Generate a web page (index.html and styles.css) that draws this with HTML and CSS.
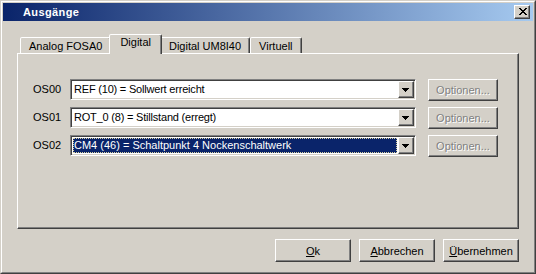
FILE: index.html
```html
<!DOCTYPE html>
<html lang="de">
<head>
    <meta charset="UTF-8">
    <title>Ausgänge</title>
    <link rel="stylesheet" href="styles.css">
</head>
<body>
    <div class="window">
        <div class="frame">
            <div class="titlebar">
                <span class="title">Ausgänge</span>
                <button class="close raised">
                    <svg width="8" height="7" viewBox="0 0 8 7" shape-rendering="crispEdges"><path d="M0 0h2v1H0z M6 0h2v1H6z M1 1h2v1H1z M5 1h2v1H5z M2 2h4v1H2z M3 3h2v1H3z M2 4h4v1H2z M1 5h2v1H1z M5 5h2v1H5z M0 6h2v1H0z M6 6h2v1H6z" fill="#000"/></svg>
                </button>
            </div>
            <div class="content">
                <div class="tabs">
                    <div class="tab">Analog FOSA0</div>
                    <div class="tab active">Digital</div>
                    <div class="tab">Digital UM8I40</div>
                    <div class="tab">Virtuell</div>
                </div>
                <div class="panel">
                    <div class="rows">
                        <div class="row">
                            <span class="label">OS00</span>
                            <div class="combo">
                                <div class="value"><span class="text narrow">REF (10) = Sollwert erreicht</span></div>
                                <div class="arrow raised">
                                    <svg width="7" height="4" viewBox="0 0 7 4" shape-rendering="crispEdges"><path d="M0 0h7v1H0z M1 1h5v1H1z M2 2h3v1H2z M3 3h1v1H3z" fill="#000"/></svg>
                                </div>
                            </div>
                            <button class="btn options raised" disabled>Optionen...</button>
                        </div>
                        <div class="row">
                            <span class="label">OS01</span>
                            <div class="combo">
                                <div class="value"><span class="text narrow">ROT_0 (8) = Stillstand (erregt)</span></div>
                                <div class="arrow raised">
                                    <svg width="7" height="4" viewBox="0 0 7 4" shape-rendering="crispEdges"><path d="M0 0h7v1H0z M1 1h5v1H1z M2 2h3v1H2z M3 3h1v1H3z" fill="#000"/></svg>
                                </div>
                            </div>
                            <button class="btn options raised" disabled>Optionen...</button>
                        </div>
                        <div class="row">
                            <span class="label">OS02</span>
                            <div class="combo">
                                <div class="value"><span class="text selected">CM4 (46) = Schaltpunkt 4 Nockenschaltwerk</span></div>
                                <div class="arrow raised">
                                    <svg width="7" height="4" viewBox="0 0 7 4" shape-rendering="crispEdges"><path d="M0 0h7v1H0z M1 1h5v1H1z M2 2h3v1H2z M3 3h1v1H3z" fill="#000"/></svg>
                                </div>
                            </div>
                            <button class="btn options raised" disabled>Optionen...</button>
                        </div>
                    </div>
                </div>
                <div class="footer">
                    <button class="btn raised"><u>O</u>k</button>
                    <button class="btn raised"><u>A</u>bbrechen</button>
                    <button class="btn raised"><u>Ü</u>bernehmen</button>
                </div>
            </div>
        </div>
    </div>
</body>
</html>
```

FILE: styles.css
```css
* {
    box-sizing: border-box;
}
body {
    margin: 0;
    background: #d4d0c8;
    font-family: "Liberation Sans", Arial, sans-serif;
    font-size: 11px;
    color: #000;
}
.window {
    width: 536px;
    height: 274px;
    border: 1px solid;
    border-color: #d4d0c8 #404040 #404040 #d4d0c8;
}
.frame {
    height: 100%;
    border: 1px solid;
    border-color: #fff #808080 #808080 #fff;
    padding: 1px;
    display: flex;
    flex-direction: column;
}
.titlebar {
    height: 18px;
    flex: none;
    background: linear-gradient(to right, #0a246a, #a6caf0);
    display: flex;
    align-items: center;
    justify-content: space-between;
    padding: 0 3px 0 20px;
}
.title {
    color: #fff;
    font-weight: bold;
    font-size: 11px;
    letter-spacing: 0.4px;
}
.raised {
    background: #d4d0c8;
    border: 1px solid;
    border-color: #fff #404040 #404040 #fff;
    box-shadow: inset -1px -1px #808080;
}
.close {
    width: 16px;
    height: 14px;
    padding: 0 0 1px 1px;
    display: flex;
    align-items: center;
    justify-content: center;
}
.content {
    flex: 1;
    padding: 13px 14px 0;
    display: flex;
    flex-direction: column;
}
.tabs {
    height: 19px;
    flex: none;
    display: flex;
    align-items: flex-end;
    padding-left: 3px;
}
.tab {
    height: 16px;
    padding: 1px 8px 0;
    border: 1px solid;
    border-bottom: none;
    border-color: #fff #404040 transparent #fff;
    box-shadow: inset -1px 0 #808080;
    border-radius: 2px 2px 0 0;
    line-height: 14px;
    background: #d4d0c8;
}
.tab.active {
    position: relative;
    z-index: 1;
    height: 20px;
    margin: 0 -2px -1px;
    padding: 1px 10px 0;
    line-height: 13px;
}
.panel {
    height: 176px;
    flex: none;
    border: 1px solid;
    border-color: #fff #404040 #404040 #fff;
    box-shadow: inset -1px -1px #808080;
    padding: 25px 0 0 15px;
}
.rows {
    display: flex;
    flex-direction: column;
    gap: 7px;
}
.row {
    display: flex;
    align-items: flex-start;
    height: 21px;
}
.label {
    width: 37px;
    line-height: 21px;
}
.combo {
    width: 346px;
    height: 21px;
    display: flex;
    background: #fff;
    border: 1px solid;
    border-color: #808080 #fff #fff #808080;
    box-shadow: inset 1px 1px #404040, inset -1px -1px #d4d0c8;
    padding: 1px;
}
.value {
    flex: 1;
    padding: 1px;
    display: flex;
}
.text {
    flex: 1;
    padding-left: 1px;
    line-height: 15px;
    white-space: nowrap;
}
.text.narrow {
    letter-spacing: -0.2px;
}
.text.selected {
    background: #0a246a;
    color: #fff;
    outline: 1px dotted #d8d0a0;
    outline-offset: -1px;
}
.arrow {
    width: 16px;
    height: 17px;
    display: flex;
    align-items: center;
    justify-content: center;
    padding: 1px 1px 0 0;
}
.btn {
    width: 76px;
    height: 23px;
    padding: 0;
    font-family: "Liberation Sans", Arial, sans-serif;
    font-size: 11px;
    color: #000;
}
.btn:disabled {
    color: #808080;
    text-shadow: 1px 1px #fff;
}
.options {
    width: 70px;
    height: 22px;
    margin-left: 12px;
}
.footer {
    display: flex;
    justify-content: flex-end;
    gap: 8px;
    margin-top: 10px;
}
```
